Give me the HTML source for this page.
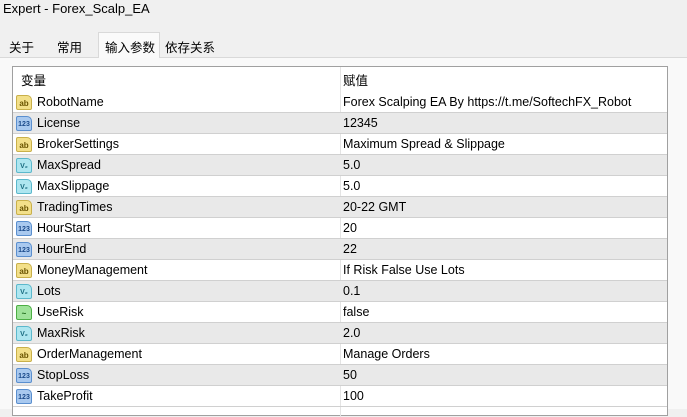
<!DOCTYPE html>
<html><head><meta charset="utf-8"><style>
*{margin:0;padding:0;box-sizing:border-box}
body{width:687px;height:409px;background:#f0f0f0;font-family:"Liberation Sans","Noto Sans CJK SC",sans-serif;font-size:12.5px;color:#000;position:relative;overflow:hidden}
.title{position:absolute;left:3px;top:1px;font-size:13px}
.tab{position:absolute;top:34px;height:23px;font-size:12.5px;padding-top:3px}
.act{background:#fafafa;border:1px solid #d9d9d9;border-bottom:none;top:32px;height:26px}
.pane{position:absolute;left:0;top:57px;width:687px;height:352px;background:#f9f9f9;border-top:1px solid #d9d9d9}
.tbl{position:absolute;left:12px;top:66px;width:656px;height:350px;border:1px solid #a0a0a0;background:#fff}
.row{position:absolute;left:0;width:654px;height:21px;border-bottom:1px solid #d0d0d0}
.g{background:#e9e9e9}
.n{position:absolute;left:24px;top:3px}
.v{position:absolute;left:330px;top:3px}
.ic{position:absolute;left:3px;top:3px;width:16px;height:15px;border-radius:2px 5px 2px 2px;font-size:8px;font-weight:bold;text-align:center;line-height:15px}
.ab{background:#f3e08a;border:1px solid #c9b04a;color:#6a5400}
.i1{background:#a9c9ef;border:1px solid #5a8fcf;color:#1b4a8a;font-size:7px}
.vz{background:#aee6f0;border:1px solid #5bb8cc;color:#1a6c80;font-size:7px}
.bo{background:#9fe39a;border:1px solid #4cae44;color:#1f6a1a}
</style></head><body>
<div class="title">Expert - Forex_Scalp_EA</div>
<div class="pane"></div>
<div class="tab" style="left:9px">关于</div>
<div class="tab" style="left:57px">常用</div>
<div class="tab act" style="left:98px;width:62px;padding-left:6px;padding-top:4px">输入参数</div>
<div class="tab" style="left:165px">依存关系</div>
<div class="tbl">
<div style="position:absolute;left:8px;top:3px">变量</div>
<div style="position:absolute;left:330px;top:3px">赋值</div>
<div style="position:absolute;left:327px;top:0;width:1px;height:350px;background:#e4e4e4"></div>
<div class="row" style="top:25px"><div class="ic ab">ab</div><span class="n">RobotName</span><span class="v">Forex Scalping EA By https://t.me/SoftechFX_Robot</span></div>
<div class="row g" style="top:46px"><div class="ic i1">123</div><span class="n">License</span><span class="v">12345</span></div>
<div class="row" style="top:67px"><div class="ic ab">ab</div><span class="n">BrokerSettings</span><span class="v">Maximum Spread &amp; Slippage</span></div>
<div class="row g" style="top:88px"><div class="ic vz">V₂</div><span class="n">MaxSpread</span><span class="v">5.0</span></div>
<div class="row" style="top:109px"><div class="ic vz">V₂</div><span class="n">MaxSlippage</span><span class="v">5.0</span></div>
<div class="row g" style="top:130px"><div class="ic ab">ab</div><span class="n">TradingTimes</span><span class="v">20-22 GMT</span></div>
<div class="row" style="top:151px"><div class="ic i1">123</div><span class="n">HourStart</span><span class="v">20</span></div>
<div class="row g" style="top:172px"><div class="ic i1">123</div><span class="n">HourEnd</span><span class="v">22</span></div>
<div class="row" style="top:193px"><div class="ic ab">ab</div><span class="n">MoneyManagement</span><span class="v">If Risk False Use Lots</span></div>
<div class="row g" style="top:214px"><div class="ic vz">V₂</div><span class="n">Lots</span><span class="v">0.1</span></div>
<div class="row" style="top:235px"><div class="ic bo">~</div><span class="n">UseRisk</span><span class="v">false</span></div>
<div class="row g" style="top:256px"><div class="ic vz">V₂</div><span class="n">MaxRisk</span><span class="v">2.0</span></div>
<div class="row" style="top:277px"><div class="ic ab">ab</div><span class="n">OrderManagement</span><span class="v">Manage Orders</span></div>
<div class="row g" style="top:298px"><div class="ic i1">123</div><span class="n">StopLoss</span><span class="v">50</span></div>
<div class="row" style="top:319px"><div class="ic i1">123</div><span class="n">TakeProfit</span><span class="v">100</span></div>
</div>
</body></html>
